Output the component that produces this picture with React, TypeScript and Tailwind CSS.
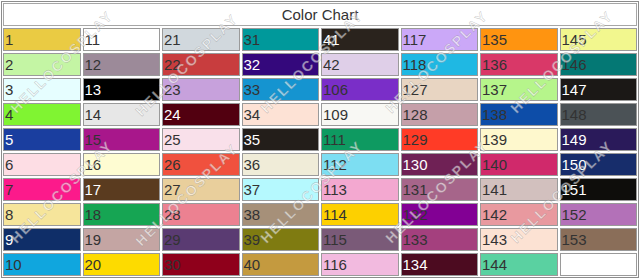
const columns: [string, string, boolean?][][] = [
  [
    ["1", "#eacb43"],
    ["2", "#c4f5a4"],
    ["3", "#e6feff"],
    ["4", "#80f432"],
    ["5", "#1a3e9f", true],
    ["6", "#fddde4"],
    ["7", "#fc1a8b"],
    ["8", "#f6e59b"],
    ["9", "#0f2e68", true],
    ["10", "#10a6de"],
  ],
  [
    ["11", "#ffffff"],
    ["12", "#9c8a99"],
    ["13", "#000000", true],
    ["14", "#e7e7e7"],
    ["15", "#a8178b"],
    ["16", "#fefcd2"],
    ["17", "#5a3b1f", true],
    ["18", "#16a553"],
    ["19", "#c4a5a3"],
    ["20", "#fddb00"],
  ],
  [
    ["21", "#d1d8dd"],
    ["22", "#c83d3e"],
    ["23", "#c7a1dc"],
    ["24", "#520010", true],
    ["25", "#f9e0ea"],
    ["26", "#f0513e"],
    ["27", "#e9cf9c"],
    ["28", "#ec8191"],
    ["29", "#5a3b72"],
    ["30", "#8f001b"],
  ],
  [
    ["31", "#00999b"],
    ["32", "#34087c", true],
    ["33", "#1594d0"],
    ["34", "#fde2d5"],
    ["35", "#231e1a", true],
    ["36", "#f0ecd8"],
    ["37", "#b5f9fe"],
    ["38", "#a69079"],
    ["39", "#7f7b11"],
    ["40", "#c49a3f"],
  ],
  [
    ["41", "#2a231d", true],
    ["42", "#dfcfe8"],
    ["106", "#7a2ec8"],
    ["109", "#f8f8f4"],
    ["111", "#0e9a61"],
    ["112", "#7ddef2"],
    ["113", "#f3a8d0"],
    ["114", "#fdd000"],
    ["115", "#7a5a78"],
    ["116", "#f2badf"],
  ],
  [
    ["117", "#cba8f8"],
    ["118", "#1fb8e3"],
    ["127", "#e8d5c2"],
    ["128", "#c59fa9"],
    ["129", "#ff3b26"],
    ["130", "#6f2155", true],
    ["131", "#a6658a"],
    ["132", "#820094"],
    ["133", "#a4407e"],
    ["134", "#4c0b20", true],
  ],
  [
    ["135", "#ff9410"],
    ["136", "#d93868"],
    ["137", "#b6f58b"],
    ["138", "#0d4da8"],
    ["139", "#fef8cd"],
    ["140", "#d0296b"],
    ["141", "#d2c0be"],
    ["142", "#e8999f"],
    ["143", "#fce2d3"],
    ["144", "#5ad1a1"],
  ],
  [
    ["145", "#f2f78e"],
    ["146", "#047874"],
    ["147", "#1b1816", true],
    ["148", "#4b5256"],
    ["149", "#2a1a5a", true],
    ["150", "#172d6b", true],
    ["151", "#0e0d0b", true],
    ["152", "#b371b8"],
    ["153", "#8a6e59"],
    ["", "#ffffff"],
  ],
];

const marks = [
  [62, 62], [187, 65], [312, 62], [437, 62], [562, 62],
  [62, 192], [187, 195], [312, 192], [437, 192], [562, 192],
];

export default function App() {
  // rows are read across the columns
  const rows = Array.from({ length: 10 }, (_, r) => columns.map((col) => col[r]));

  return (
    <div className="relative h-[279px] w-[640px] overflow-hidden bg-white font-['Liberation_Sans',Arial,sans-serif]">
      <div className="ml-px mt-px w-[638px] border border-[#8c8c8c] p-px">
        <div className="flex flex-col gap-[2px]">
          <div className="h-[23px] border border-[#a6a6a6] text-center text-[15px] leading-[21px] text-[#333]">
            Color Chart
          </div>
          {rows.map((row, i) => (
            <div key={i} className="grid grid-cols-8 gap-[2px]">
              {row.map(([label, color, light]) => (
                <div
                  key={label || "blank"}
                  className={`h-[23px] border border-[#9a9a9a] pl-px text-[15px] leading-[21px] ${
                    light ? "text-white" : "text-[#333]"
                  }`}
                  style={{ backgroundColor: color }}
                >
                  {label}
                </div>
              ))}
            </div>
          ))}
        </div>
      </div>

      {/* watermark */}
      {marks.map(([x, y], i) => (
        <span
          key={i}
          className="pointer-events-none absolute -translate-x-1/2 -translate-y-1/2 -rotate-45 whitespace-nowrap text-[14px] font-bold tracking-[2px] text-white/55 [-webkit-text-stroke:0.6px_rgba(90,90,90,0.3)]"
          style={{ left: x, top: y }}
        >
          HELLOCOSPLAY
        </span>
      ))}
    </div>
  );
}
